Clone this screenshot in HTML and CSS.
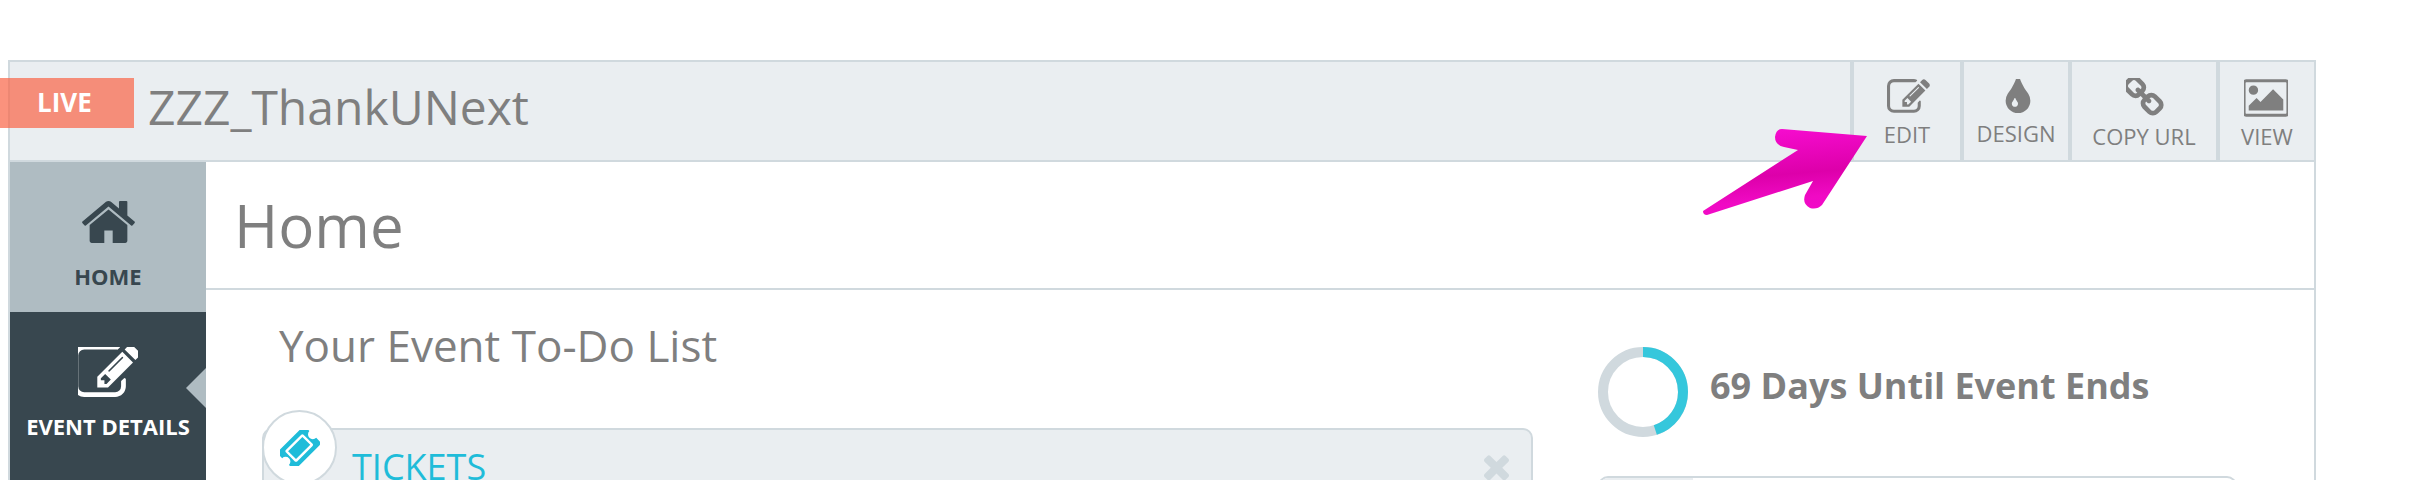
FILE: index.html
```html
<!DOCTYPE html>
<html lang="en">
<head>
    <meta charset="UTF-8">
    <meta name="viewport" content="width=device-width, initial-scale=1.0">
    <title>ZZZ_ThankUNext - Home</title>
    <link rel="stylesheet" href="styles.css">
</head>
<body>
    <div class="frame">
        <!-- Event header -->
        <header class="topbar">
            <span class="live-badge">LIVE</span>
            <span class="event-name">ZZZ_ThankUNext</span>
            <nav class="actions">
                <a class="action action-edit">
                    <svg class="action-icon icon-edit" viewBox="0 0 1792 1792"><path d="M888 1184l116-116-152-152-116 116v56h96v96h56zm440-720q-16-16-33 1l-350 350q-17 17-1 33t33-1l350-350q17-17 1-33zm80 594v190q0 119-84.500 203.500t-203.500 84.500h-832q-119 0-203.500-84.500t-84.500-203.500v-832q0-119 84.500-203.500t203.500-84.500h832q63 0 117 25 15 7 18 23 3 17-9 29l-49 49q-14 14-32 8-23-6-45-6h-832q-66 0-113 47t-47 113v832q0 66 47 113t113 47h832q66 0 113-47t47-113v-126q0-13 9-22l64-64q15-15 35-7t20 29zm-96-738l288 288-672 672h-288v-288zm444 132l-92 92-288-288 92-92q28-28 68-28t68 28l152 152q28 28 28 68t-28 68z"/></svg>
                    <span>EDIT</span>
                </a>
                <a class="action action-design">
                    <svg class="action-icon icon-design" viewBox="384 128 1024 1408"><path d="M896 1152q0-36-20-69-1-1-15.500-22.500t-25.500-38-25-44-21-50.500q-4-16-21-16t-21 16q-7 23-21 50.500t-25 44-25.500 38-15.500 22.500q-20 33-20 69 0 53 37.500 90.500t90.500 37.500 90.500-37.500 37.500-90.500zm512-128q0 212-150 362t-362 150-362-150-150-362q0-145 81-275 6-9 62.500-90.500t101-151 99.500-178 83-201.500q9-30 34-47t51-17 51.500 17 33.500 47q28 93 83 201.500t99.500 178 101 151 62.500 90.500q81 127 81 275z"/></svg>
                    <span>DESIGN</span>
                </a>
                <a class="action action-copy">
                    <svg class="action-icon icon-copy" viewBox="128 128 1536 1536"><path d="M1456 1216q0-40-28-68l-208-208q-28-28-68-28-42 0-72 32 3 3 19 18.500t21.500 21.500 15 19 13 25.500 3.500 27.500q0 40-28 68t-68 28q-15 0-27.500-3.500t-25.500-13-19-15-21.500-21.500-18.500-19q-33 31-33 73 0 40 28 68l206 207q27 27 68 27 40 0 68-26l147-146q28-28 28-67zm-703-705q0-40-28-68l-206-207q-28-28-68-28-39 0-68 27l-147 146q-28 28-28 67 0 40 28 68l208 208q27 27 68 27 42 0 72-31-3-3-19-18.500t-21.500-21.500-15-19-13-25.500-3.500-27.500q0-40 28-68t68-28q15 0 27.500 3.500t25.500 13 19 15 21.500 21.500 18.500 19q33-31 33-73zm895 705q0 120-85 203l-147 146q-83 83-203 83-121 0-204-85l-206-207q-83-83-83-203 0-123 88-209l-88-88q-86 88-208 88-120 0-204-84l-208-208q-84-84-84-204t85-203l147-146q83-83 203-83 121 0 204 85l206 207q83 83 83 203 0 123-88 209l88 88q86-88 208-88 120 0 204 84l208 208q84 84 84 204z"/></svg>
                    <span>COPY URL</span>
                </a>
                <a class="action action-view">
                    <svg class="action-icon icon-view" viewBox="0 128 1792 1536"><path d="M576 576q0 80-56 136t-136 56-136-56-56-136 56-136 136-56 136 56 56 136zm1024 384v448h-1408v-192l320-320 160 160 512-512zm96-704h-1600q-13 0-22.500 9.500t-9.500 22.500v1216q0 13 9.500 22.500t22.500 9.500h1600q13 0 22.500-9.500t9.500-22.500v-1216q0-13-9.500-22.500t-22.500-9.500zm160 32v1216q0 66-47 113t-113 47h-1600q-66 0-113-47t-47-113v-1216q0-66 47-113t113-47h1600q66 0 113 47t47 113z"/></svg>
                    <span>VIEW</span>
                </a>
            </nav>
        </header>

        <div class="layout">
            <!-- Side menu -->
            <aside class="sidebar">
                <a class="side-item side-home">
                    <svg class="side-icon icon-home" viewBox="64 224 1664 1344"><path d="M1472 992v480q0 26-19 45t-45 19h-384v-384h-256v384h-384q-26 0-45-19t-19-45v-480q0-1 .5-3t.5-3l575-474 575 474q1 2 1 6zm223-69l-62 74q-8 9-21 11h-3q-13 0-21-7l-692-577-692 577q-12 8-24 7-13-2-21-11l-62-74q-8-10-7-23.500t11-21.500l719-599q32-26 76-26t76 26l244 204v-195q0-14 9-23t23-9h192q14 0 23 9t9 23v408l219 182q10 8 11 21.500t-7 23.500z"/></svg>
                    <span>HOME</span>
                </a>
                <a class="side-item side-details">
                    <svg class="side-icon icon-details" viewBox="128 192 1600 1344"><path d="M888 1184l116-116-152-152-116 116v56h96v96h56zm440-720q-16-16-33 1l-350 350q-17 17-1 33t33-1l350-350q17-17 1-33zm80 594v190q0 119-84.500 203.500t-203.500 84.500h-832q-119 0-203.500-84.500t-84.500-203.500v-832q0-119 84.500-203.500t203.500-84.500h832q63 0 117 25 15 7 18 23 3 17-9 29l-49 49q-14 14-32 8-23-6-45-6h-832q-66 0-113 47t-47 113v832q0 66 47 113t113 47h832q66 0 113-47t47-113v-126q0-13 9-22l64-64q15-15 35-7t20 29zm-96-738l288 288-672 672h-288v-288zm444 132l-92 92-288-288 92-92q28-28 68-28t68 28l152 152q28 28 28 68t-28 68z"/></svg>
                    <span>EVENT DETAILS</span>
                    <i class="side-notch"></i>
                </a>
            </aside>

            <main class="main">
                <h1 class="page-title">Home</h1>
                <div class="columns">
                    <section class="todo">
                        <h2 class="todo-title">Your Event To-Do List</h2>
                        <div class="todo-card">
                            <span class="todo-badge">
                                <svg class="icon-ticket" viewBox="128 256 1600 1280"><path d="M1024 452l316 316-572 572-316-316zm-211 979l618-618q19-19 19-45t-19-45l-362-362q-18-18-45-18t-45 18l-618 618q-19 19-19 45t19 45l362 362q18 18 45 18t45-18zm889-637l-907 908q-37 37-90.500 37t-90.500-37l-126-126q56-56 56-136t-56-136-136-56-136 56l-125-126q-37-37-37-90.500t37-90.500l907-906q37-37 90.500-37t90.500 37l125 125q-56 56-56 136t56 136 136 56 136-56l126 125q37 37 37 90.500t-37 90.500z"/></svg>
                            </span>
                            <span class="todo-name">TICKETS</span>
                            <svg class="todo-close" viewBox="256 256 1280 1280"><path d="M1490 1322q0 40-28 68l-136 136q-28 28-68 28t-68-28l-294-294-294 294q-28 28-68 28t-68-28l-136-136q-28-28-28-68t28-68l294-294-294-294q-28-28-28-68t28-68l136-136q28-28 68-28t68 28l294 294 294-294q28-28 68-28t68 28l136 136q28 28 28 68t-28 68l-294 294 294 294q28 28 28 68z"/></svg>
                        </div>
                    </section>
                    <section class="stats">
                        <div class="countdown">
                            <svg class="ring" viewBox="0 0 90 90">
                                <circle class="ring-track" cx="45" cy="45" r="40"/>
                                <circle class="ring-value" cx="45" cy="45" r="40" pathLength="100" stroke-dasharray="45 100" transform="rotate(-90 45 45)"/>
                            </svg>
                            <span class="countdown-text">69 Days Until Event Ends</span>
                        </div>
                        <div class="stat-panel">
                            <div class="stat-tab"></div>
                        </div>
                    </section>
                </div>
            </main>
        </div>
    </div>

    <!-- Annotation arrow pasted over the screenshot -->
    <svg class="callout" viewBox="0 0 180 100">
        <defs>
            <linearGradient id="arrow-fill" x1="0.45" y1="0" x2="0.62" y2="1">
                <stop offset="0" stop-color="#f60ccf"/>
                <stop offset="0.52" stop-color="#dd00aa"/>
                <stop offset="0.8" stop-color="#f00ac4"/>
                <stop offset="1" stop-color="#f20bc9"/>
            </linearGradient>
        </defs>
        <path fill="url(#arrow-fill)" d="M92 9 L177 16 L132 85 Q127 90 120 88 Q112 84 115 75 L123 61 L17 95 Q13 95 13 91 L108 30 L94 27 Q85 25 85 17 Q86 9 92 9 Z"/>
    </svg>
</body>
</html>
```

FILE: styles.css
```css
html, body {
    height: 100%;
    overflow: hidden;
}

body {
    margin: 0;
    padding: 60px 0 0 8px;
    box-sizing: border-box;
    background-color: #fff;
    color: #7f7f7f;
    font-family: "Open Sans", "Noto Sans", sans-serif;
}

.frame {
    width: 2308px;
    box-sizing: border-box;
    border: 2px solid #d0d9de;
    border-bottom: none;
}

/* Top bar */
.topbar {
    display: flex;
    align-items: stretch;
    height: 100px;
    box-sizing: border-box;
    background-color: #eaeef1;
    border-bottom: 2px solid #d0d9de;
}

.live-badge {
    align-self: flex-start;
    width: 134px;
    height: 50px;
    margin: 16px 0 0 -10px;
    padding-left: 37px;
    box-sizing: border-box;
    background-color: rgba(250, 100, 70, 0.7);
    color: #fff;
    font-size: 26px;
    font-weight: 700;
    line-height: 48px;
}

.event-name {
    margin-left: 14px;
    font-size: 48px;
    line-height: 90px;
}

.actions {
    display: flex;
    margin-left: auto;
}

.action {
    display: flex;
    flex-direction: column;
    align-items: center;
    box-sizing: border-box;
    border-left: 4px solid #d0d9de;
    font-size: 22px;
    line-height: 28px;
}

.action svg {
    fill: #7f7f7f;
    flex: none;
}

.action-edit { width: 110px; }
.action-design { width: 108px; }
.action-copy { width: 148px; }
.action-view { width: 98px; }

.icon-edit { width: 43px; height: 43px; margin: 14px 0 1px 2px; }
.icon-design { width: 26px; height: 34px; margin: 17px 0 6px 3px; }
.icon-copy { width: 38px; height: 38px; margin: 16px 0 6px 2px; }
.icon-view { width: 44px; height: 38px; margin: 17px 0 5px -2px; }

/* Side menu */
.layout {
    display: flex;
}

.sidebar {
    flex: none;
    width: 196px;
}

.side-item {
    display: flex;
    flex-direction: column;
    align-items: center;
    position: relative;
    font-size: 22px;
    font-weight: 700;
    line-height: 30px;
}

.side-home {
    height: 150px;
    background-color: #afbcc2;
    color: #38474f;
}

.side-details {
    height: 170px;
    background-color: #38474f;
    color: #fff;
}

.side-icon { flex: none; }

.icon-home {
    width: 55px;
    height: 44px;
    margin: 38px 0 17px;
    fill: #38474f;
}

.icon-details {
    width: 60px;
    height: 50px;
    margin: 35px 0 14px;
    fill: #fff;
}

.side-notch {
    position: absolute;
    right: 0;
    top: 56px;
    width: 0;
    height: 0;
    border-top: 20px solid transparent;
    border-bottom: 20px solid transparent;
    border-right: 20px solid #afbcc2;
}

/* Main content */
.main {
    flex: 1;
    min-width: 0;
}

.page-title {
    height: 128px;
    margin: 0;
    padding-left: 28px;
    box-sizing: border-box;
    border-bottom: 2px solid #d0d9de;
    font-size: 60px;
    font-weight: 400;
    line-height: 126px;
}

.columns {
    display: flex;
}

.todo {
    flex: none;
    width: 1327px;
    padding-left: 56px;
    box-sizing: border-box;
}

.todo-title {
    margin: 30px 0 0 17px;
    font-size: 44px;
    font-weight: 400;
    line-height: 50px;
}

.todo-card {
    display: flex;
    position: relative;
    height: 120px;
    margin-top: 58px;
    border: 2px solid #d0d9de;
    border-radius: 10px;
    background-color: #eaeef1;
}

.todo-badge {
    display: flex;
    align-items: center;
    justify-content: center;
    position: absolute;
    left: -2px;
    top: -20px;
    width: 75px;
    height: 75px;
    box-sizing: border-box;
    border: 2px solid #d0d9de;
    border-radius: 50%;
    background-color: #fff;
}

.icon-ticket {
    width: 40px;
    height: 36px;
    fill: #1fbcd9;
}

.todo-name {
    margin: 15px 0 0 88px;
    color: #1fbcd9;
    font-size: 36px;
    line-height: 44px;
}

.todo-close {
    width: 27px;
    height: 27px;
    margin: 23px 21px 0 auto;
    fill: #d0d9de;
}

/* Right column */
.stats {
    flex: none;
    width: 639px;
    margin-left: 65px;
}

.countdown {
    display: flex;
    align-items: center;
    height: 90px;
    margin-top: 57px;
}

.ring {
    flex: none;
    width: 90px;
    height: 90px;
    fill: none;
    stroke-width: 10;
}

.ring-track { stroke: #d0d9de; }
.ring-value { stroke: #35c7dc; }

.countdown-text {
    margin: -13px 0 0 22px;
    font-size: 36px;
    font-weight: 700;
}

.stat-panel {
    height: 100px;
    margin-top: 39px;
    border: 2px solid #d0d9de;
    border-radius: 10px;
}

.stat-tab {
    width: 93px;
    height: 100%;
    border-radius: 8px 0 0 0;
    background-color: #eaeef1;
}

/* Annotation */
.callout {
    position: absolute;
    left: 1690px;
    top: 120px;
    width: 180px;
    height: 100px;
}
```
